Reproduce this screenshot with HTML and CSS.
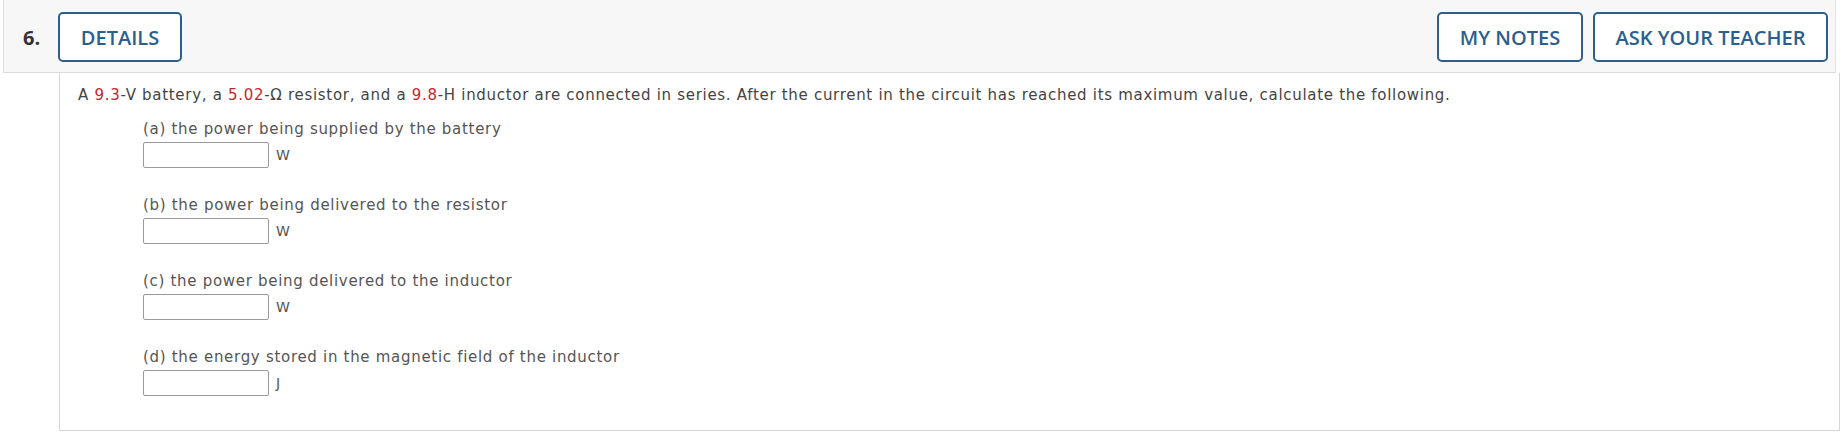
FILE: index.html
```html
<!DOCTYPE html>
<html>
<head>
<meta charset="utf-8">
<link rel="stylesheet" href="styles.css">
</head>
<body>
<div class="question">
  <div class="header">
    <span class="qnum">6.</span>
    <button class="btn btn-details">DETAILS</button>
    <div class="spacer"></div>
    <button class="btn btn-notes">MY NOTES</button>
    <button class="btn btn-ask">ASK YOUR TEACHER</button>
  </div>
  <div class="body">
    <p class="stem">A <span class="red">9.3</span>-V battery, a <span class="red">5.02</span>-Ω resistor, and a <span class="red">9.8</span>-H inductor are connected in series. After the current in the circuit has reached its maximum value, calculate the following.</p>
    <div class="part">
      <div class="label">(a) the power being supplied by the battery</div>
      <div class="answer"><span class="field"></span><span class="unit">W</span></div>
    </div>
    <div class="part">
      <div class="label">(b) the power being delivered to the resistor</div>
      <div class="answer"><span class="field"></span><span class="unit">W</span></div>
    </div>
    <div class="part">
      <div class="label">(c) the power being delivered to the inductor</div>
      <div class="answer"><span class="field"></span><span class="unit">W</span></div>
    </div>
    <div class="part">
      <div class="label">(d) the energy stored in the magnetic field of the inductor</div>
      <div class="answer"><span class="field"></span><span class="unit">J</span></div>
    </div>
  </div>
</div>
</body>
</html>
```
FILE: styles.css
```css
html, body {
  margin: 0;
  padding: 0;
  background: #fff;
}
.question {
  width: 1844px;
}
.header {
  display: flex;
  align-items: center;
  box-sizing: border-box;
  margin-left: 3px;
  width: 1833px;
  height: 73px;
  padding: 12px 7px 10px 19px;
  background: #f7f7f7;
  border-left: 1px solid #e2e2e2;
  border-right: 1px solid #e2e2e2;
  border-bottom: 1px solid #dcdcdc;
}
.qnum {
  font-family: "Open Sans", sans-serif;
  font-weight: 700;
  font-size: 20px;
  color: #333;
  width: 35px;
}
.spacer {
  flex: 1;
}
.btn {
  box-sizing: border-box;
  height: 50px;
  background: #fff;
  border: 2px solid #2b5f8e;
  border-radius: 5px;
  color: #2b5f8e;
  font-family: "Open Sans", sans-serif;
  font-weight: 600;
  font-size: 20px;
  padding: 0;
  cursor: pointer;
}
.btn-details { width: 124px; }
.btn-notes { width: 146px; margin-right: 10px; }
.btn-ask { width: 235px; }
.body {
  box-sizing: border-box;
  margin-left: 59px;
  width: 1781px;
  border-left: 1px solid #d6d6d6;
  border-right: 1px solid #d6d6d6;
  border-bottom: 1px solid #d6d6d6;
  padding: 12px 18px 34px 18px;
  font-family: "DejaVu Sans", Verdana, sans-serif;
  font-size: 15px;
  letter-spacing: 0.7px;
  color: #444;
}
.stem {
  margin: 0;
  line-height: 20px;
}
.red {
  color: #c4262e;
}
.part {
  margin-left: 65px;
  margin-top: 27px;
}
.stem + .part {
  margin-top: 14px;
}
.label {
  line-height: 20px;
  color: #555;
}
.answer {
  display: flex;
  align-items: center;
  margin-top: 3px;
  height: 26px;
}
.field {
  box-sizing: border-box;
  width: 126px;
  height: 26px;
  border: 1px solid #9a9a9a;
  border-radius: 2px;
  background: #fff;
}
.unit {
  margin-left: 7px;
  font-size: 14px;
  letter-spacing: 0;
  color: #555;
}
```
